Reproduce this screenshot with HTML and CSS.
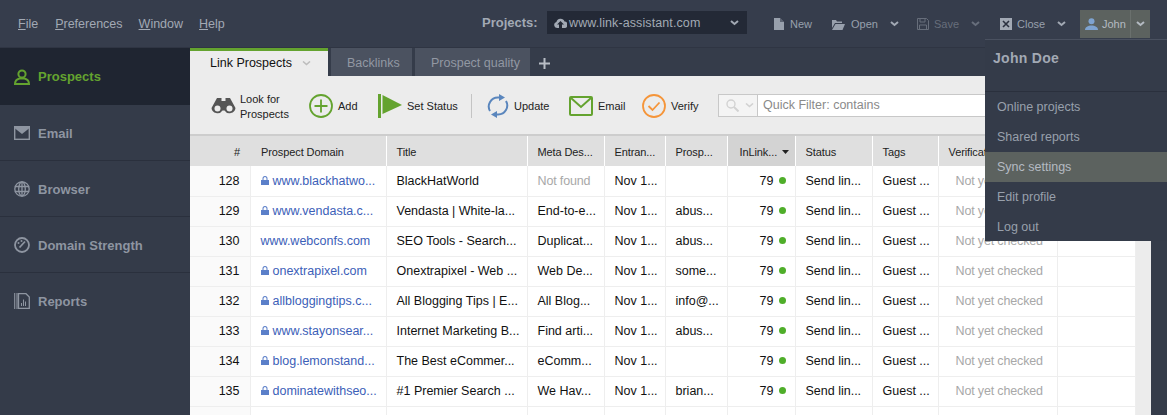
FILE: index.html
```html
<!DOCTYPE html>
<html lang="en">
<head>
<meta charset="utf-8">
<title>Link Prospects</title>
<link rel="stylesheet" href="styles.css">
</head>
<body>
<div class="app">
  <header class="topbar">
    <nav class="menubar">
      <a class="menu-file"><u>F</u>ile</a>
      <a class="menu-pref"><u>P</u>references</a>
      <a class="menu-win"><u>W</u>indow</a>
      <a><u>H</u>elp</a>
    </nav>
    <div class="projects">
      <b class="projects-label">Projects:</b>
      <div class="project-select">
        <svg class="i-cloud" width="13" height="10" viewBox="0 0 13 10"><path d="M3 10a3 3 0 0 1-.6-5.900A4.200 4.200 0 0 1 10.500 3.600 3.200 3.200 0 0 1 10 10H8V6.500h2L6.500 3 3 6.500h2V10z" fill="#a2a9b4"/></svg>
        <span class="project-name">www.link-assistant.com</span>
        <svg class="chev" width="9" height="6" viewBox="0 0 9 6"><path d="M1 1l3.500 3L8 1" fill="none" stroke="#a2a9b4" stroke-width="2"/></svg>
      </div>
    </div>
    <div class="actions">
      <div class="action a-new">
        <svg width="10" height="12" viewBox="0 0 10 12"><path d="M0 0h6l4 4v8H0z" fill="#98a0ac"/><path d="M6 0v4h4" fill="#363d4c" opacity=".6"/></svg>
        <span>New</span>
      </div>
      <div class="action a-open">
        <svg width="13" height="11" viewBox="0 0 13 11"><path d="M0 1h4l1 1.500h5V4H3L0 9z" fill="#98a0ac"/><path d="M3.500 5H13l-2.500 6H0z" fill="#98a0ac"/></svg>
        <span>Open</span>
        <svg class="chev" width="9" height="6" viewBox="0 0 9 6"><path d="M1 1l3.500 3L8 1" fill="none" stroke="#a2a9b4" stroke-width="2"/></svg>
      </div>
      <div class="action a-save">
        <svg width="12" height="12" viewBox="0 0 12 12"><path d="M.5.500h9l2 2v9H.5z" fill="none" stroke="#676e7b"/><path d="M3 .500h5v3.500H3zM2.500 7h7v4.500h-7z" fill="none" stroke="#676e7b"/></svg>
        <span>Save</span>
        <svg class="chev" width="9" height="6" viewBox="0 0 9 6"><path d="M1 1l3.500 3L8 1" fill="none" stroke="#676e7b" stroke-width="2"/></svg>
      </div>
      <div class="action a-close">
        <svg width="12" height="12" viewBox="0 0 12 12"><rect width="12" height="12" fill="#a2a9b4"/><path d="M3 3l6 6M9 3l-6 6" stroke="#2b3140" stroke-width="1.600"/></svg>
        <span>Close</span>
        <svg class="chev" width="9" height="6" viewBox="0 0 9 6"><path d="M1 1l3.500 3L8 1" fill="none" stroke="#a2a9b4" stroke-width="2"/></svg>
      </div>
      <div class="user-btn">
        <div class="user-main">
          <svg width="13" height="12" viewBox="0 0 13 12"><circle cx="6.500" cy="3.200" r="3" fill="#7ea3d0"/><path d="M0 12c0-3 3-4.500 6.500-4.500S13 9 13 12z" fill="#7ea3d0"/></svg>
          <span>John</span>
        </div>
        <div class="user-arrow">
          <svg width="9" height="6" viewBox="0 0 9 6"><path d="M1 1l3.500 3L8 1" fill="none" stroke="#b4bac2" stroke-width="2"/></svg>
        </div>
      </div>
    </div>
  </header>

  <div class="workspace">
    <aside class="sidebar">
      <div class="side-item active">
        <svg width="16" height="16" viewBox="0 0 16 16"><circle cx="8" cy="5" r="3.600" fill="none" stroke="#64a32f" stroke-width="2"/><path d="M1 15c0-3.500 2.500-5 4.500-5.500h5c2 .5 4.500 2 4.500 5.500z" fill="none" stroke="#64a32f" stroke-width="2"/></svg>
        <span>Prospects</span>
      </div>
      <div class="side-item">
        <svg width="16" height="14" viewBox="0 0 16 14"><rect x=".7" y=".7" width="14.600" height="12.600" fill="none" stroke="#8e95a1" stroke-width="1.400"/><path d="M1 1h14v1.500L8 8 1 2.500z" fill="#8e95a1"/></svg>
        <span>Email</span>
      </div>
      <div class="side-item">
        <svg width="16" height="16" viewBox="0 0 16 16"><g fill="none" stroke="#8e95a1" stroke-width="1.300"><circle cx="8" cy="8" r="7.200"/><ellipse cx="8" cy="8" rx="3.300" ry="7.200"/><path d="M.8 5.500h14.400M.8 10.500h14.400M8 .8v14.400"/></g></svg>
        <span>Browser</span>
      </div>
      <div class="side-item">
        <svg width="16" height="16" viewBox="0 0 16 16"><circle cx="8" cy="8" r="7" fill="none" stroke="#8e95a1" stroke-width="1.800"/><path d="M5.500 10.500L11 4.500" stroke="#8e95a1" stroke-width="1.800"/><circle cx="4.500" cy="6" r="1" fill="#8e95a1"/><circle cx="7.500" cy="4" r="1" fill="#8e95a1"/></svg>
        <span>Domain Strength</span>
      </div>
      <div class="side-item">
        <svg width="16" height="16" viewBox="0 0 16 16"><path d="M.7 0v16M3 0v16" stroke="#8e95a1" stroke-width="1.100"/><path d="M4.500.7h7.500l3.300 3.300v11.300H4.500z" fill="none" stroke="#8e95a1" stroke-width="1.300"/><path d="M7.500 13V10M9.500 13V6.500M11.500 13V8.500" stroke="#8e95a1"/></svg>
        <span>Reports</span>
      </div>
    </aside>

    <main class="content">
      <div class="tabs">
        <div class="tab tab-active">
          <span>Link Prospects</span>
          <svg width="9" height="5" viewBox="0 0 9 5"><path d="M1 .5l3.500 3 3.500-3" fill="none" stroke="#bdbdbd" stroke-width="1.600"/></svg>
        </div>
        <div class="tab tab-backlinks">Backlinks</div>
        <div class="tab tab-quality">Prospect quality</div>
        <svg class="tab-plus" width="11" height="11" viewBox="0 0 11 11"><path d="M5.500 0v11M0 5.500h11" stroke="#b8bdc5" stroke-width="2"/></svg>
      </div>

      <div class="toolbar">
        <div class="tool t-look">
          <svg width="25" height="18" viewBox="0 0 25 18"><path d="M6 1h4.500v3h4V1H19l5.500 10a6 6 0 0 1-11 2.500h-2A6 6 0 0 1 .5 11z" fill="#555"/><circle cx="6.500" cy="11.500" r="3" fill="#ececec"/><circle cx="18.500" cy="11.500" r="3" fill="#ececec"/></svg>
          <span class="t-two">Look for<br>Prospects</span>
        </div>
        <div class="tool t-add">
          <svg width="24" height="24" viewBox="0 0 24 24"><circle cx="12" cy="12" r="11" fill="none" stroke="#64a32f" stroke-width="1.800"/><path d="M12 5.500v13M5.500 12h13" stroke="#64a32f" stroke-width="1.800"/></svg>
          <span>Add</span>
        </div>
        <div class="tool t-status">
          <svg width="24" height="24" viewBox="0 0 24 24"><rect width="3" height="24" fill="#64a32f"/><path d="M4.500 1L24 11 4.500 20z" fill="#64a32f"/></svg>
          <span>Set Status</span>
        </div>
        <div class="tool-sep"></div>
        <div class="tool t-update">
          <svg width="22" height="24" viewBox="0 0 22 24"><g fill="none" stroke="#5a86bd" stroke-width="2"><path d="M3 17A9 9 0 0 1 11 3.500h3"/><path d="M19 7a9 9 0 0 1-8 13.500H8"/></g><path d="M12 0l6 3.500-6 3.500zM10 17l-6 3.500 6 3.500z" fill="#5a86bd"/></svg>
          <span>Update</span>
        </div>
        <div class="tool t-email">
          <svg width="24" height="20" viewBox="0 0 24 20"><rect x="1" y="1" width="22" height="18" rx="1" fill="none" stroke="#64a32f" stroke-width="2"/><path d="M2 2l10 9 10-9" fill="none" stroke="#64a32f" stroke-width="2"/></svg>
          <span>Email</span>
        </div>
        <div class="tool t-verify">
          <svg width="24" height="24" viewBox="0 0 24 24"><circle cx="12" cy="12" r="11" fill="none" stroke="#f5953a" stroke-width="1.800"/><path d="M6.500 12l4 4 7-7.500" fill="none" stroke="#f5953a" stroke-width="1.800"/></svg>
          <span>Verify</span>
        </div>
        <div class="filter">
          <div class="filter-mode">
            <svg width="13" height="13" viewBox="0 0 13 13"><circle cx="5" cy="5" r="4" fill="none" stroke="#d2d2d2" stroke-width="1.400"/><path d="M8 8l4.500 4.500" stroke="#d2d2d2" stroke-width="2"/></svg>
            <svg width="9" height="5" viewBox="0 0 9 5"><path d="M1 .5l3.500 3 3.500-3" fill="none" stroke="#d2d2d2" stroke-width="1.600"/></svg>
          </div>
          <div class="filter-input">Quick Filter: contains</div>
        </div>
      </div>

      <div class="grid-wrap">
        <table class="grid">
          <colgroup>
            <col class="c-num"><col class="c-domain"><col class="c-title"><col class="c-meta"><col class="c-entr"><col class="c-prosp"><col class="c-inl"><col class="c-status"><col class="c-tags"><col class="c-verif"><col class="c-rest">
          </colgroup>
          <thead>
            <tr>
              <th class="num">#</th><th class="dom">Prospect Domain</th><th>Title</th><th>Meta Des...</th><th>Entran...</th><th>Prosp...</th>
              <th class="sorted">InLink...<svg class="sort" width="7" height="4" viewBox="0 0 7 4"><path d="M0 0h7L3.500 4z" fill="#222"/></svg></th>
              <th>Status</th><th>Tags</th><th>Verification</th><th></th>
            </tr>
          </thead>
          <tbody>
            <tr><td class="num">128</td><td class="dom"><svg class="lock" width="8" height="9" viewBox="0 0 8 9"><path d="M0 4h8v5H0zM1.500 4V2.500a2.500 2.500 0 0 1 5 0V4H5.500V2.500a1.500 1.500 0 0 0-3 0V4z" fill="#5b7fc9"/></svg>www.blackhatwo...</td><td>BlackHatWorld</td><td class="muted">Not found</td><td>Nov 1...</td><td></td><td class="inl">79<i class="dot"></i></td><td>Send lin...</td><td>Guest ...</td><td class="muted ctr">Not yet checked</td><td></td></tr>
            <tr><td class="num">129</td><td class="dom"><svg class="lock" width="8" height="9" viewBox="0 0 8 9"><path d="M0 4h8v5H0zM1.500 4V2.500a2.500 2.500 0 0 1 5 0V4H5.500V2.500a1.500 1.500 0 0 0-3 0V4z" fill="#5b7fc9"/></svg>www.vendasta.c...</td><td>Vendasta | White-la...</td><td>End-to-e...</td><td>Nov 1...</td><td>abus...</td><td class="inl">79<i class="dot"></i></td><td>Send lin...</td><td>Guest ...</td><td class="muted ctr">Not yet checked</td><td></td></tr>
            <tr><td class="num">130</td><td class="dom">www.webconfs.com</td><td>SEO Tools - Search...</td><td>Duplicat...</td><td>Nov 1...</td><td>abus...</td><td class="inl">79<i class="dot"></i></td><td>Send lin...</td><td>Guest ...</td><td class="muted ctr">Not yet checked</td><td></td></tr>
            <tr><td class="num">131</td><td class="dom"><svg class="lock" width="8" height="9" viewBox="0 0 8 9"><path d="M0 4h8v5H0zM1.500 4V2.500a2.500 2.500 0 0 1 5 0V4H5.500V2.500a1.500 1.500 0 0 0-3 0V4z" fill="#5b7fc9"/></svg>onextrapixel.com</td><td>Onextrapixel - Web ...</td><td>Web De...</td><td>Nov 1...</td><td>some...</td><td class="inl">79<i class="dot"></i></td><td>Send lin...</td><td>Guest ...</td><td class="muted ctr">Not yet checked</td><td></td></tr>
            <tr><td class="num">132</td><td class="dom"><svg class="lock" width="8" height="9" viewBox="0 0 8 9"><path d="M0 4h8v5H0zM1.500 4V2.500a2.500 2.500 0 0 1 5 0V4H5.500V2.500a1.500 1.500 0 0 0-3 0V4z" fill="#5b7fc9"/></svg>allbloggingtips.c...</td><td>All Blogging Tips | E...</td><td>All Blog...</td><td>Nov 1...</td><td>info@...</td><td class="inl">79<i class="dot"></i></td><td>Send lin...</td><td>Guest ...</td><td class="muted ctr">Not yet checked</td><td></td></tr>
            <tr><td class="num">133</td><td class="dom"><svg class="lock" width="8" height="9" viewBox="0 0 8 9"><path d="M0 4h8v5H0zM1.500 4V2.500a2.500 2.500 0 0 1 5 0V4H5.500V2.500a1.500 1.500 0 0 0-3 0V4z" fill="#5b7fc9"/></svg>www.stayonsear...</td><td>Internet Marketing B...</td><td>Find arti...</td><td>Nov 1...</td><td>abus...</td><td class="inl">79<i class="dot"></i></td><td>Send lin...</td><td>Guest ...</td><td class="muted ctr">Not yet checked</td><td></td></tr>
            <tr><td class="num">134</td><td class="dom"><svg class="lock" width="8" height="9" viewBox="0 0 8 9"><path d="M0 4h8v5H0zM1.500 4V2.500a2.500 2.500 0 0 1 5 0V4H5.500V2.500a1.500 1.500 0 0 0-3 0V4z" fill="#5b7fc9"/></svg>blog.lemonstand...</td><td>The Best eCommer...</td><td>eComm...</td><td>Nov 1...</td><td></td><td class="inl">79<i class="dot"></i></td><td>Send lin...</td><td>Guest ...</td><td class="muted ctr">Not yet checked</td><td></td></tr>
            <tr><td class="num">135</td><td class="dom"><svg class="lock" width="8" height="9" viewBox="0 0 8 9"><path d="M0 4h8v5H0zM1.500 4V2.500a2.500 2.500 0 0 1 5 0V4H5.500V2.500a1.500 1.500 0 0 0-3 0V4z" fill="#5b7fc9"/></svg>dominatewithseo...</td><td>#1 Premier Search ...</td><td>We Hav...</td><td>Nov 1...</td><td>brian...</td><td class="inl">79<i class="dot"></i></td><td>Send lin...</td><td>Guest ...</td><td class="muted ctr">Not yet checked</td><td></td></tr>
            <tr><td class="num"></td><td></td><td></td><td></td><td></td><td></td><td></td><td></td><td></td><td></td><td></td></tr>
          </tbody>
        </table>
        <div class="scroll-strip"></div>
      </div>
    </main>
  </div>

  <div class="user-menu">
    <div class="user-name">John Doe</div>
    <ul class="user-list">
      <li>Online projects</li>
      <li>Shared reports</li>
      <li class="hover">Sync settings</li>
      <li>Edit profile</li>
      <li>Log out</li>
    </ul>
  </div>
</div>
</body>
</html>
```

FILE: styles.css
```css
* { box-sizing: border-box; }
html, body { margin: 0; padding: 0; }
body {
  width: 1167px;
  height: 415px;
  overflow: hidden;
  font-family: "Liberation Sans", Arial, sans-serif;
  font-size: 12px;
  color: #111;
  background: #353c4a;
}
svg { display: block; flex: none; }
.app { position: relative; width: 1167px; height: 415px; display: flex; flex-direction: column; overflow: hidden; }

/* top bar */
.topbar { height: 48px; flex: none; display: flex; align-items: flex-start; background: #363d4c; border-bottom: 1px solid #2f3543; color: #a2a9b4; }
.menubar { display: flex; padding: 17px 0 0 18px; width: 482px; }
.menubar a { display: block; line-height: 14px; font-size: 12.500px; }
.menu-file { margin-right: 17px; }
.menu-pref { margin-right: 16px; }
.menu-win { margin-right: 16px; }
.projects { display: flex; align-items: center; height: 23px; margin-top: 11px; width: 273px; }
.projects-label { width: 65px; flex: none; font-size: 13px; color: #a2a9b4; }
.project-select { width: 200px; flex: none; height: 23px; background: #232936; display: flex; align-items: center; padding: 0 8px 0 7px; }
.project-name { flex: 1; margin-left: 2px; font-size: 12.500px; letter-spacing: .1px; }
.actions { display: flex; align-items: center; height: 28px; margin-top: 10px; font-size: 11px; }
.action { display: flex; align-items: center; color: #98a0ac; }
.action span { margin-left: 6px; }
.action .chev { margin-left: 12px; }
.a-new { width: 58px; margin-left: 19px; }
.a-open { width: 85px; }
.a-save { width: 83px; color: #676e7b; }
.a-close { width: 80px; }
.a-save span, .a-close span { margin-left: 5px; }
.user-btn { width: 70px; height: 28px; display: flex; background: #5c625f; color: #b4bac2; }
.user-main { width: 51px; display: flex; align-items: center; padding-left: 5px; border-right: 1px solid #6a706d; }
.user-main span { margin-left: 4px; }
.user-arrow { flex: 1; display: flex; align-items: center; justify-content: center; }

/* layout */
.workspace { flex: 1; display: flex; min-height: 0; padding-right: 16px; background: #353c4a; }
.sidebar { width: 190px; flex: none; background: #343b49; }
.side-item { height: 56px; display: flex; align-items: center; padding: 1px 0 0 14px; border-bottom: 1px solid #2a303d; font-size: 13px; font-weight: bold; color: #8e95a1; }
.side-item svg { width: 16px; }
.side-item span { margin-left: 8px; }
.side-item.active { height: 57px; padding-top: 0; background: #1f2531; color: #64a32f; border-bottom: 0; }
.side-item:last-child { border-bottom: 0; padding-top: 0; }

.content { flex: 1; min-width: 0; display: flex; flex-direction: column; }
.tabs { height: 28px; flex: none; display: flex; background: #353c4a; }
.tab { height: 28px; display: flex; align-items: center; padding-top: 1px; font-size: 12.500px; }
.tab-active { width: 138px; background: #ececec; border-top: 3px solid #64a32f; padding: 0 0 1px 20px; color: #111; }
.tab-active svg { margin-left: 10px; }
.tab-backlinks { width: 81px; margin-left: 3px; padding-left: 16px; background: #4b5260; color: #9298a3; }
.tab-quality { width: 115px; margin-left: 3px; padding-left: 16px; background: #4b5260; color: #9298a3; }
.tab-plus { margin: 10px 0 0 9px; }

.toolbar { height: 60px; flex: none; display: flex; align-items: center; background: #ececec; border-bottom: 2px solid #cdcdcd; padding: 1px 0 0 21px; }
.tool { flex: none; display: flex; align-items: center; font-size: 11px; color: #222; }
.tool span { margin-left: 5px; }
.tool .t-two { line-height: 15px; margin-left: 4px; padding-top: 2px; }
.t-look { width: 98px; }
.t-add { width: 69px; }
.t-status { width: 93px; }
.tool-sep { flex: none; width: 1px; height: 24px; background: #c4c4c4; margin-right: 15px; }
.t-update { width: 82px; }
.t-email { width: 73px; }
.t-verify { width: 76px; }
.filter { width: 440px; height: 23px; flex: none; display: flex; background: #fff; border: 1px solid #c8c8c8; }
.filter-mode { width: 39px; height: 21px; flex: none; display: flex; align-items: center; gap: 6px; padding-left: 7px; background: #f4f4f4; border-right: 1px solid #c8c8c8; }
.filter-input { flex: 1; line-height: 21px; padding-left: 5px; font-size: 12.500px; color: #8a8a8a; white-space: nowrap; }

/* grid */
.grid-wrap { flex: 1; min-height: 0; display: flex; overflow: hidden; background: #fff; }
.grid { width: 945px; flex: none; border-collapse: collapse; table-layout: fixed; align-self: flex-start; }
.scroll-strip { flex: 1; background: #ececec; }
.c-num { width: 60px; }
.c-domain { width: 136px; }
.c-title { width: 141px; }
.c-meta { width: 77px; }
.c-entr { width: 61px; }
.c-prosp { width: 62px; }
.c-inl { width: 68px; }
.c-status { width: 77px; }
.c-tags { width: 66px; }
.c-verif { width: 119px; }
.c-rest { width: 78px; }
.grid th, .grid td { padding: 0 0 0 10px; overflow: hidden; white-space: nowrap; text-align: left; }
.grid th { height: 30px; padding-top: 1px; background: #dfdfdf; font-weight: normal; font-size: 11px; letter-spacing: -.1px; color: #222; border-right: 1px solid #fff; }
.grid th:first-child { border-right: 0; }
.grid th.sorted { background: #d3d3d3; padding-left: 12px; }
.sort { display: inline-block; margin: 0 0 2px 5px; }
.grid td { height: 30px; font-size: 12.500px; border-right: 1px solid #eee; border-bottom: 1px solid #eee; background: #fff; }
.grid .num { text-align: right; padding: 0 10px 0 0; }
.grid th.num { padding: 1px 10px 0 0; }
.grid td.num { background: #fafafa; }
.grid .dom { color: #3c60b8; padding-left: 10px; }
.grid th.dom { color: #222; padding-left: 11px; }
.lock { display: inline-block; margin-right: 4px; vertical-align: 0; }
.grid td.muted { color: #a8a8a8; letter-spacing: -.15px; }
.grid td.ctr { padding: 0 0 0 17px; }
.grid td.inl { text-align: right; padding: 0 9px 0 0; }
.dot { display: inline-block; width: 7px; height: 7px; margin-left: 5px; border-radius: 50%; background: #4fae2a; vertical-align: 1px; }

/* user dropdown */
.user-menu { position: absolute; left: 985px; top: 39px; width: 182px; height: 202px; background: #343b49; border-top: 1px solid #4a5160; color: #98a0ac; }
.user-name { height: 52px; padding: 11px 0 0 8px; font-size: 14px; font-weight: bold; letter-spacing: .3px; line-height: 15px; color: #a2a9b4; border-bottom: 1px solid #2a303d; }
.user-list { margin: 0; padding: 0; list-style: none; }
.user-list li { height: 30px; line-height: 31px; padding-left: 12px; font-size: 12.500px; }
.user-list li.hover { background: #5c625f; color: #b4bac2; }
```
